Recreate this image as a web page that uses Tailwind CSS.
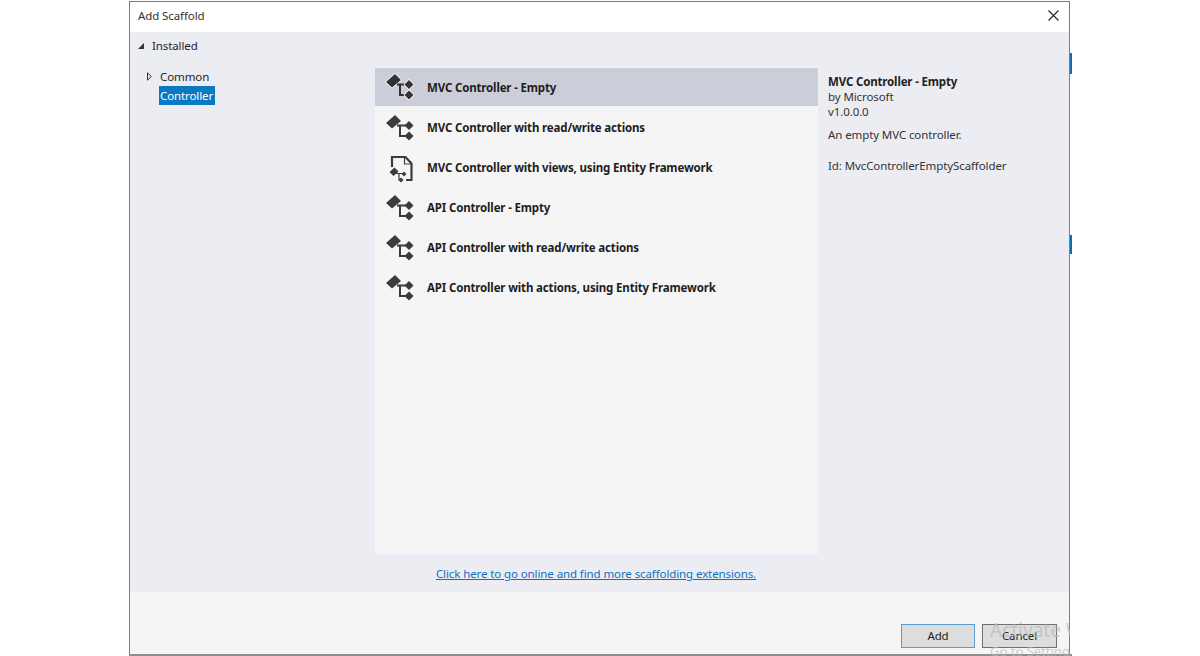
<!DOCTYPE html>
<html lang="en">
<head>
<meta charset="UTF-8" />
<title>Add Scaffold</title>
<script src="https://cdn.jsdelivr.net/npm/@tailwindcss/browser@4"></script>
</head>
<body class="bg-white">
<svg width="0" height="0" class="absolute">
  <symbol id="ctl" viewBox="0 0 32 32">
    <path d="M2 11 11 3 17 9 8 16.500Z" />
    <path d="M13 13.500H24M16 13.500V24H24" fill="none" stroke="currentColor" stroke-width="2" />
    <path d="M20.500 13.500 25 9 29.500 13.500 25 18Z" />
    <path d="M20.500 24 25 19.500 29.500 24 25 28.500Z" />
  </symbol>
</svg>

<div class="relative w-[1200px] h-[656px] overflow-hidden pl-[129px] pt-px font-['Noto_Sans',sans-serif] text-[11.5px] tracking-[-0.1px] text-[#1e1e1e]">
  <!-- dialog -->
  <div class="w-[941px] h-[654px] p-px bg-[#2f95d6]">
  <div class="h-full flex flex-col bg-[#ecedf2]">
    <div class="h-[30px] shrink-0 bg-white flex items-center justify-between pl-2 pr-[10px] pb-[3px]">
      <span class="text-[#333]">Add Scaffold</span>
      <svg width="11" height="11" viewBox="0 0 11 11" stroke="#222" stroke-width="1.100"><path d="M.5.500l10 10M10.500.500l-10 10"/></svg>
    </div>

    <div class="h-[560px] shrink-0 flex flex-col">
      <div class="h-[29px] shrink-0 flex items-center pl-2 gap-2 pb-[2px]">
        <span class="w-0 h-0 border-l-[6px] border-l-transparent border-b-[6px] border-b-[#333]"></span>
        <span>Installed</span>
      </div>
      <div class="flex flex-1 min-h-0">
        <!-- tree -->
        <div class="w-[245px] shrink-0 pl-[17px] pt-[6px]">
          <div class="h-[19px] flex items-center gap-2">
            <svg width="5" height="9" viewBox="0 0 5 9" fill="none" stroke="#333"><path d="M.5.800 4.300 4.500.5 8.200Z"/></svg>
            <span>Common</span>
          </div>
          <div class="ml-[12px] w-[56px] h-[19px] bg-[#0a78c2] text-white flex items-center pl-px">Controller</div>
        </div>

        <!-- list -->
        <div class="w-[443px] h-[487px] mt-[6px] shrink-0 bg-[#f5f5f5] pt-px tracking-[-0.16px] font-bold">
          <div class="h-[38px] bg-[#cbcdd9] flex items-center pl-[9px] pt-[2px] gap-[11px]">
            <svg width="32" height="32" class="text-[#333] fill-[#333] stroke-white stroke-[1.500] [paint-order:stroke] -mt-[2px]"><use href="#ctl"/></svg>
            <span>MVC Controller - Empty</span>
          </div>
          <div class="h-[40px] mt-[2px] flex items-center pl-[9px] gap-[11px]">
            <svg width="32" height="32" class="text-[#3c3c3c] fill-[#3c3c3c]"><use href="#ctl"/></svg>
            <span>MVC Controller with read/write actions</span>
          </div>
          <div class="h-[40px] flex items-center pl-[9px] gap-[11px]">
            <svg width="32" height="32" viewBox="0 0 32 32" fill="none">
              <path d="M8 15V5H21.500L27.500 11.500V28H22" stroke="#3c3c3c" stroke-width="2.200"/>
              <path d="M20.500 5V12H27" stroke="#3c3c3c" stroke-width="1.200"/>
              <path d="M5.500 20 10.500 15.500 14.500 19.500 9.500 24Z" fill="#3c3c3c"/>
              <path d="M12 21.500H20M15 21.500V28H18" stroke="#3c3c3c" stroke-width="1.200"/>
              <path d="M17.500 22 20 19.500 22.500 22 20 24.500Z" fill="#3c3c3c"/>
              <path d="M14.500 28 17 25.500 19.500 28 17 30.500Z" fill="#3c3c3c"/>
            </svg>
            <span>MVC Controller with views, using Entity Framework</span>
          </div>
          <div class="h-[40px] flex items-center pl-[9px] gap-[11px]">
            <svg width="32" height="32" class="text-[#3c3c3c] fill-[#3c3c3c]"><use href="#ctl"/></svg>
            <span>API Controller - Empty</span>
          </div>
          <div class="h-[40px] flex items-center pl-[9px] gap-[11px]">
            <svg width="32" height="32" class="text-[#3c3c3c] fill-[#3c3c3c]"><use href="#ctl"/></svg>
            <span>API Controller with read/write actions</span>
          </div>
          <div class="h-[40px] flex items-center pl-[9px] gap-[11px]">
            <svg width="32" height="32" class="text-[#3c3c3c] fill-[#3c3c3c]"><use href="#ctl"/></svg>
            <span>API Controller with actions, using Entity Framework</span>
          </div>
        </div>

        <!-- details -->
        <div class="pl-[10px] pt-[13px] leading-[15px] text-[#333]">
          <div class="font-bold tracking-[-0.16px] text-[#222]">MVC Controller - Empty</div>
          <div>by Microsoft</div>
          <div>v1.0.0.0</div>
          <div class="mt-2">An empty MVC controller.</div>
          <div class="mt-4">Id: MvcControllerEmptyScaffolder</div>
        </div>
      </div>
      <div class="h-[38px] shrink-0 flex justify-center pr-[7px] pt-[12px]">
        <a href="#" class="text-[#0e70c0] underline leading-[16px]">Click here to go online and find more scaffolding extensions.</a>
      </div>
    </div>

    <div class="flex-1 bg-[#f5f5f5] flex justify-end items-end gap-[7px] pr-[12px] pb-[6px]">
      <button class="w-[74px] h-[24px] bg-[#dddddd] border border-[#5b9bd0] text-[#222]">Add</button>
      <button class="w-[75px] h-[24px] bg-[#dddddd] border border-[#707070] text-[#222]">Cancel</button>
    </div>
  </div>
  </div>

  <!-- bits of the window behind -->
  <div class="absolute left-[1070px] top-[53px] w-[2px] h-[21px] bg-[#0a6fb5]"></div>
  <div class="absolute left-[1070px] top-[235px] w-[2px] h-[19px] bg-[#0a6fb5]"></div>
  <div class="absolute left-[129px] top-[654px] w-[943px] h-[2px] bg-[#8a8f94]"></div>

  <!-- activation watermark -->
  <div class="absolute left-[990px] top-[617px] w-[80px] h-[39px] overflow-hidden whitespace-nowrap text-[#b9b9b9]/70 tracking-normal pointer-events-none">
    <div class="text-[19px] leading-[26px]">Activate Windows</div>
    <div class="text-[13px] leading-[15px] mt-[1px]">Go to Settings</div>
  </div>
</div>
</body>
</html>
